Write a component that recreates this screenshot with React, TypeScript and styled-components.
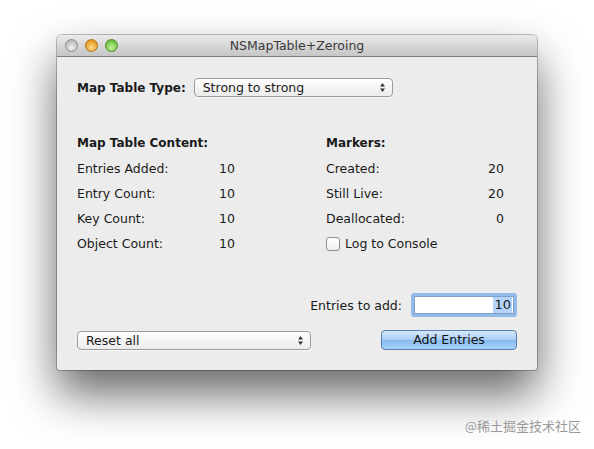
import styled, { createGlobalStyle } from 'styled-components';

const GlobalStyle = createGlobalStyle`
  html, body {
    margin: 0;
    padding: 0;
    background: #ffffff;
  }
  body {
    font-family: "DejaVu Sans", "Liberation Sans", sans-serif;
    font-size: 12.5px;
    color: #1a1a1a;
  }
`;

const Page = styled.div`
  position: relative;
  width: 594px;
  height: 449px;
  padding: 35px 0 0 57px;
  box-sizing: border-box;
  overflow: hidden;
`;

const Window = styled.div`
  width: 480px;
  height: 335px;
  display: flex;
  flex-direction: column;
  border-radius: 5px 5px 3px 3px;
  background: #ececec;
  box-shadow: 0 0 0 1px rgba(0, 0, 0, 0.25), 0 24px 46px rgba(0, 0, 0, 0.6);
  overflow: hidden;
`;

const TitleBar = styled.div`
  position: relative;
  height: 21px;
  flex: none;
  display: flex;
  align-items: center;
  justify-content: center;
  background: linear-gradient(#ebebeb, #d3d3d3 60%, #c6c6c6);
  border-bottom: 1px solid #7d7d7d;
  font-size: 12.5px;
  color: #3a3a3a;
`;

const Lights = styled.div`
  position: absolute;
  left: 8px;
  top: 4px;
  display: flex;
  gap: 7px;
`;

const Light = styled.span<{ $c1: string; $c2: string; $border: string }>`
  width: 13px;
  height: 13px;
  border-radius: 50%;
  box-sizing: border-box;
  border: 1px solid ${(p) => p.$border};
  background: radial-gradient(circle at 50% 70%, ${(p) => p.$c1}, ${(p) => p.$c2} 75%);
`;

const Content = styled.div`
  flex: 1;
  display: flex;
  flex-direction: column;
  padding: 21px 20px 20px 20px;
`;

const TypeRow = styled.div`
  display: flex;
  align-items: center;
  gap: 8px;
`;

const BoldLabel = styled.span`
  font-weight: bold;
  font-size: 12px;
`;

const Popup = styled.div<{ $w: number }>`
  width: ${(p) => p.$w}px;
  height: 19px;
  box-sizing: border-box;
  display: flex;
  align-items: center;
  justify-content: space-between;
  padding: 0 6px 0 8px;
  background: linear-gradient(#ffffff, #f4f4f4 50%, #ececec);
  border: 1px solid #9c9c9c;
  border-radius: 4px;
  box-shadow: 0 1px 0 rgba(255, 255, 255, 0.6);
  font-size: 12.5px;
`;

const Columns = styled.div`
  display: grid;
  grid-template-columns: 249px 178px;
  margin-top: 34px;
`;

const Column = styled.div`
  display: flex;
  flex-direction: column;
`;

const Heading = styled.div`
  height: 25px;
  line-height: 24px;
  font-weight: bold;
  font-size: 12px;
`;

const Row = styled.div<{ $labelW: number; $valueAlign: string }>`
  height: 25px;
  display: grid;
  grid-template-columns: ${(p) => p.$labelW}px 1fr;
  align-items: center;
  & > span:last-child {
    text-align: ${(p) => p.$valueAlign};
  }
`;

const CheckRow = styled.label`
  height: 25px;
  display: flex;
  align-items: center;
  gap: 5px;
`;

const CheckBox = styled.span`
  width: 14px;
  height: 14px;
  box-sizing: border-box;
  border: 1px solid #8e8e8e;
  border-radius: 3px;
  background: linear-gradient(#ffffff, #f0f0f0);
`;

const AddRow = styled.div`
  margin-top: 37px;
  display: flex;
  justify-content: flex-end;
  align-items: center;
  gap: 9px;
`;

const Field = styled.div`
  width: 106px;
  height: 24px;
  box-sizing: border-box;
  border: 3px solid #93bbe8;
  border-radius: 3px;
  background: #ffffff;
  display: flex;
  justify-content: flex-end;
  align-items: center;
  padding-right: 2px;
  box-shadow: inset 0 0 0 1px #7f9fc9;
`;

const Selected = styled.span`
  background: #b4d4fb;
  padding: 0 1px;
  line-height: 16px;
  font-size: 13px;
`;

const BottomRow = styled.div`
  margin-top: auto;
  display: flex;
  justify-content: space-between;
  align-items: center;
`;

const Button = styled.button`
  width: 136px;
  height: 20px;
  box-sizing: border-box;
  border: 1px solid #5a7eaf;
  border-radius: 4px;
  background: linear-gradient(#d6e8fa, #a9cdf3 50%, #86bbee 51%, #a8d3f7);
  font-family: inherit;
  font-size: 12.5px;
  line-height: 16px;
  color: #111;
  padding: 0 0 1px;
`;

const Watermark = styled.div`
  position: absolute;
  right: 13px;
  bottom: 14px;
  font-family: "Noto Sans CJK SC", sans-serif;
  font-size: 13px;
  color: #9a9a9a;
`;

function Arrows() {
  return (
    <svg width="7" height="11" viewBox="0 0 7 11">
      <path d="M3.5 1 L6 4.5 L1 4.5 Z" fill="#333" />
      <path d="M3.5 10 L6 6.5 L1 6.5 Z" fill="#333" />
    </svg>
  );
}

const LEFT_ROWS = [
  ['Entries Added:', '10'],
  ['Entry Count:', '10'],
  ['Key Count:', '10'],
  ['Object Count:', '10'],
];

const RIGHT_ROWS = [
  ['Created:', '20'],
  ['Still Live:', '20'],
  ['Deallocated:', '0'],
];

export default function App() {
  return (
    <>
      <GlobalStyle />
      <Page>
        <Window>
          <TitleBar>
            <Lights>
              <Light $c1="#f2f2f2" $c2="#b8b8b8" $border="#8d8d8d" />
              <Light $c1="#ffd98a" $c2="#e89a22" $border="#a8701c" />
              <Light $c1="#c4f0a0" $c2="#6cbf3c" $border="#4d8c2a" />
            </Lights>
            NSMapTable+Zeroing
          </TitleBar>
          <Content>
            <TypeRow>
              <BoldLabel>Map Table Type:</BoldLabel>
              <Popup $w={199}>
                <span>Strong to strong</span>
                <Arrows />
              </Popup>
            </TypeRow>
            <Columns>
              <Column>
                <Heading>Map Table Content:</Heading>
                {LEFT_ROWS.map(([label, value]) => (
                  <Row key={label} $labelW={142} $valueAlign="left">
                    <span>{label}</span>
                    <span>{value}</span>
                  </Row>
                ))}
              </Column>
              <Column>
                <Heading>Markers:</Heading>
                {RIGHT_ROWS.map(([label, value]) => (
                  <Row key={label} $labelW={120} $valueAlign="right">
                    <span>{label}</span>
                    <span>{value}</span>
                  </Row>
                ))}
                <CheckRow>
                  <CheckBox />
                  <span>Log to Console</span>
                </CheckRow>
              </Column>
            </Columns>
            <AddRow>
              <span>Entries to add:</span>
              <Field>
                <Selected>10</Selected>
              </Field>
            </AddRow>
            <BottomRow>
              <Popup $w={234}>
                <span>Reset all</span>
                <Arrows />
              </Popup>
              <Button>Add Entries</Button>
            </BottomRow>
          </Content>
        </Window>
        <Watermark>@稀土掘金技术社区</Watermark>
      </Page>
    </>
  );
}
